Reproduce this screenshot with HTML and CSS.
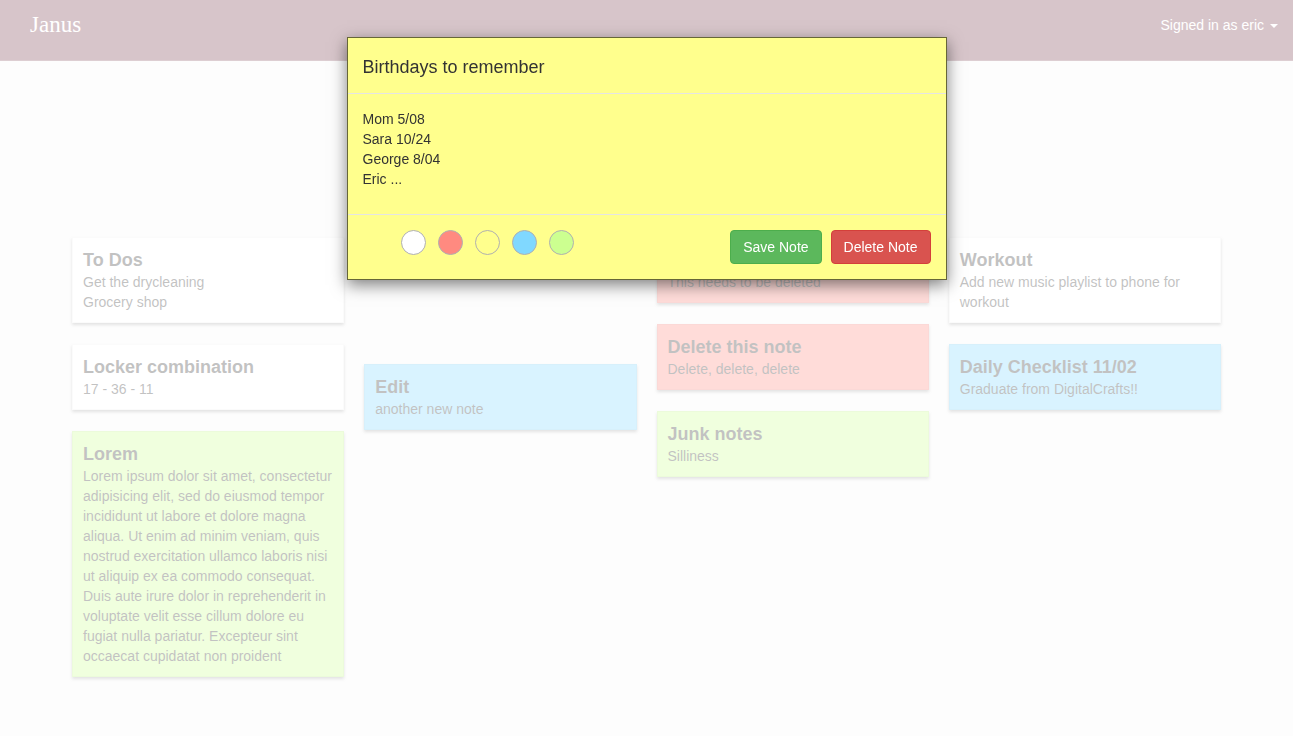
FILE: index.html
```html
<!DOCTYPE html>
<html lang="en">
<head>
<meta charset="utf-8">
<title>Janus</title>
<link rel="stylesheet" href="styles.css">
</head>
<body>
<header class="navbar">
  <a class="brand" href="#">Janus</a>
  <a class="user" href="#">Signed in as eric <span class="caret"></span></a>
</header>

<main class="board">
  <div class="column">
    <article class="note note-white">
      <h3>To Dos</h3>
      <p>Get the drycleaning<br>Grocery shop</p>
    </article>
    <article class="note note-white">
      <h3>Locker combination</h3>
      <p>17 - 36 - 11</p>
    </article>
    <article class="note note-green">
      <h3>Lorem</h3>
      <p>Lorem ipsum dolor sit amet, consectetur adipisicing elit, sed do eiusmod tempor incididunt ut labore et dolore magna aliqua. Ut enim ad minim veniam, quis nostrud exercitation ullamco laboris nisi ut aliquip ex ea commodo consequat. Duis aute irure dolor in reprehenderit in voluptate velit esse cillum dolore eu fugiat nulla pariatur. Excepteur sint occaecat cupidatat non proident</p>
    </article>
  </div>
  <div class="column">
    <article class="note note-yellow note-editing">
      <h3>Birthdays to remember</h3>
      <p>Mom 5/08<br>Sara 10/24<br>George 8/04</p>
    </article>
    <article class="note note-blue">
      <h3>Edit</h3>
      <p>another new note</p>
    </article>
  </div>
  <div class="column">
    <article class="note note-red">
      <h3>Delete me</h3>
      <p>This needs to be deleted</p>
    </article>
    <article class="note note-red">
      <h3>Delete this note</h3>
      <p>Delete, delete, delete</p>
    </article>
    <article class="note note-green">
      <h3>Junk notes</h3>
      <p>Silliness</p>
    </article>
  </div>
  <div class="column">
    <article class="note note-white">
      <h3>Workout</h3>
      <p>Add new music playlist to phone for workout</p>
    </article>
    <article class="note note-blue">
      <h3>Daily Checklist 11/02</h3>
      <p>Graduate from DigitalCrafts!!</p>
    </article>
  </div>
</main>

<div class="backdrop"></div>

<div class="modal">
  <div class="modal-content">
    <div class="modal-header">
      <h4>Birthdays to remember</h4>
    </div>
    <div class="modal-body">
      Mom 5/08<br>Sara 10/24<br>George 8/04<br>Eric ...
    </div>
    <div class="modal-footer">
      <div class="swatches">
        <span class="swatch sw-white"></span>
        <span class="swatch sw-red"></span>
        <span class="swatch sw-yellow"></span>
        <span class="swatch sw-blue"></span>
        <span class="swatch sw-green"></span>
      </div>
      <div class="actions">
        <button class="btn btn-success">Save Note</button>
        <button class="btn btn-danger">Delete Note</button>
      </div>
    </div>
  </div>
</div>
</body>
</html>
```

FILE: styles.css
```css
* { box-sizing: border-box; }

html, body {
  margin: 0;
  padding: 0;
}

body {
  background: #f8f8f8;
  font-family: "Liberation Sans", Arial, Helvetica, sans-serif;
  font-size: 14px;
  line-height: 20px;
  color: #333;
  min-height: 736px;
}

.navbar {
  height: 61px;
  background: #7a3e4e;
  border-bottom: 1px solid #8c5a68;
  display: flex;
  align-items: center;
  justify-content: space-between;
  padding: 0 15px 0 30px;
}

.brand {
  font-family: "Liberation Serif", "Times New Roman", serif;
  font-size: 23px;
  color: #fff;
  text-decoration: none;
  margin-top: -10px;
}

.user {
  color: #fff;
  text-decoration: none;
  font-size: 14px;
  margin-top: -10px;
  display: flex;
  align-items: center;
  gap: 6px;
}

.caret {
  display: inline-block;
  width: 0;
  height: 0;
  border-top: 4px solid #fff;
  border-left: 4px solid transparent;
  border-right: 4px solid transparent;
  margin-top: 1px;
}

.board {
  width: 1149px;
  margin: 176px auto 0;
  display: grid;
  grid-template-columns: repeat(4, 1fr);
  column-gap: 20px;
  align-items: start;
}

.column {
  display: flex;
  flex-direction: column;
  gap: 21px;
}

.note {
  border: 1px solid rgba(0, 0, 0, 0.06);
  padding: 11px 8px 10px 10px;
  box-shadow: 0 2px 3px rgba(0, 0, 0, 0.35);
}

.note h3 {
  margin: 0 0 1px;
  font-size: 18px;
  line-height: 22px;
  font-weight: bold;
}

.note p {
  margin: 0;
  font-size: 14px;
  line-height: 20px;
}

.note-white { background: #ffffff; }
.note-red { background: #ff8a80; }
.note-blue { background: #80d8ff; }
.note-green { background: #ccff90; }
.note-yellow { background: #ffff8d; }

.note-editing { visibility: hidden; }

.backdrop {
  position: fixed;
  inset: 0;
  background: rgba(255, 255, 255, 0.7);
  z-index: 10;
}

.modal {
  position: fixed;
  top: 37px;
  left: 0;
  right: 0;
  z-index: 20;
}

.modal-content {
  width: 600px;
  margin: 0 auto;
  background: #ffff8d;
  border: 1px solid rgba(0, 0, 0, 0.6);
  box-shadow: 0 5px 15px rgba(0, 0, 0, 0.5);
}

.modal-header {
  padding: 17px 15px 13px;
  border-bottom: 1px solid #e5e5e5;
}

.modal-header h4 {
  margin: 0;
  font-size: 18px;
  font-weight: normal;
  line-height: 25px;
  color: #333;
}

.modal-body {
  padding: 15px 15px 25px;
  font-size: 14px;
  line-height: 20px;
  color: #333;
}

.modal-footer {
  padding: 15px;
  border-top: 1px solid #e5e5e5;
  display: flex;
  justify-content: space-between;
  align-items: flex-start;
}

.swatches {
  display: flex;
  gap: 12px;
  margin-left: 38px;
}

.swatch {
  width: 25px;
  height: 25px;
  border-radius: 50%;
  border: 1px solid #b0b0b0;
}

.sw-white { background: #ffffff; }
.sw-red { background: #ff8a80; }
.sw-yellow { background: #ffff8d; }
.sw-blue { background: #80d8ff; }
.sw-green { background: #ccff90; }

.actions {
  display: flex;
  gap: 9px;
}

.btn {
  font-family: "Liberation Sans", Arial, Helvetica, sans-serif;
  font-size: 14px;
  line-height: 20px;
  padding: 6px 12px;
  border-radius: 4px;
  border: 1px solid transparent;
  color: #fff;
  cursor: pointer;
}

.btn-success {
  background: #5cb85c;
  border-color: #4cae4c;
}

.btn-danger {
  background: #d9534f;
  border-color: #d43f3a;
}
```
